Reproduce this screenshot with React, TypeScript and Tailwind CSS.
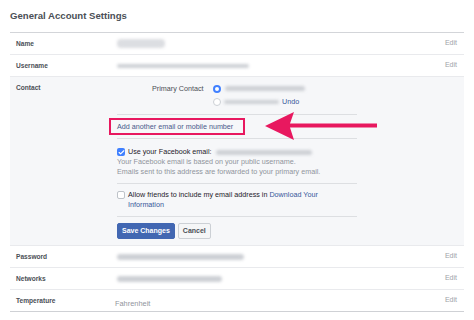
import { Check } from 'lucide-react';

const font = { fontFamily: '"Liberation Sans", Arial, sans-serif' };

function Blur({ w, h = 6, className = '' }: { w: number; h?: number; className?: string }) {
  return <div className={`bg-[#cdd0d5] rounded-sm blur-[1.5px] ${className}`} style={{ width: w, height: h }} />;
}

function Row({ label, value, last = false }: { label: string; value: React.ReactNode; last?: boolean }) {
  return (
    <div className={`flex items-center h-[22px] ${last ? 'border-b border-[#cfd1d5]' : 'border-b border-[#e9eaed]'}`}>
      <div className="w-[107px] pl-[6px] text-[6.6px] font-bold text-[#4b4f56]">{label}</div>
      <div className="flex-1">{value}</div>
      <div className="pr-[7px] text-[7px] text-[#9ea2a8]">Edit</div>
    </div>
  );
}

export default function App() {
  return (
    <div className="w-[474px] h-[320px] bg-white px-[10px] overflow-hidden" style={font}>
      <div className="h-[32px] flex items-center text-[9.6px] font-bold text-[#4b4f56]">General Account Settings</div>

      <div className="border-t border-[#d3d5d9]">
        <Row label="Name" value={<Blur w={48} h={9} className="bg-[#dcdee2]" />} />
        <Row label="Username" value={<Blur w={132} h={4} />} />

        {/* Contact section */}
        <div className="relative flex bg-[#f6f7f9] h-[169px] border-b border-[#e9eaed]">
          <div className="w-[107px] pl-[6px] pt-[6px] text-[6.6px] font-bold text-[#4b4f56] leading-[10px]">Contact</div>
          <div className="w-[240px] text-[7.2px] leading-[10px] text-[#4b4f56]">
            <div className="flex items-center h-[11px] mt-[6px] pl-[35px]">
              <span className="w-[61px]">Primary Contact</span>
              <span className="w-[8px] h-[8px] rounded-full border-[2.5px] border-[#4080ff] bg-white" />
              <Blur w={80} h={5} className="ml-[4px]" />
            </div>
            <div className="flex items-center h-[11px] mt-[2px] pl-[96px]">
              <span className="w-[8px] h-[8px] rounded-full border border-[#ccd0d5] bg-white" />
              <Blur w={55} h={4} className="ml-[3px]" />
              <span className="ml-[3px] text-[#365899]">Undo</span>
            </div>
            <div className="border-t border-[#dddfe2] mt-[7px]" />
            <div className="-ml-[8px] mt-[3px] w-[136px] h-[17px] border-[2.5px] border-[#e8185f] flex items-center pl-[6px] text-[#4a5a8a]">
              Add another email or mobile number
            </div>
            <div className="border-t border-[#dddfe2] mt-[3px]" />
            <div className="flex items-center h-[10px] mt-[8px]">
              <span className="w-[8px] h-[8px] rounded-[2px] bg-[#4080ff] flex items-center justify-center">
                <Check className="w-[7px] h-[7px] text-white" strokeWidth={4} />
              </span>
              <span className="ml-[3px] text-[#1d2129]">Use your Facebook email:</span>
              <Blur w={96} h={5} className="ml-[4px]" />
            </div>
            <div className="text-[#90949c]">Your Facebook email is based on your public username.</div>
            <div className="text-[#90949c]">Emails sent to this address are forwarded to your primary email.</div>
            <div className="border-t border-[#dddfe2] mt-[6px]" />
            <div className="flex mt-[6px]">
              <span className="w-[8px] h-[8px] mt-[1px] rounded-[2px] border border-[#bec3c9] bg-white shrink-0" />
              <p className="ml-[3px] w-[200px] text-[#1d2129]">
                Allow friends to include my email address in <span className="text-[#365899]">Download Your Information</span>
              </p>
            </div>
            <div className="border-t border-[#dddfe2] mt-[6px]" />
            <div className="flex mt-[6px] gap-[3px]">
              <button className="h-[16px] px-[4px] bg-[#4267b2] border border-[#4267b2] text-white font-bold text-[7px] rounded-[2px]">Save Changes</button>
              <button className="h-[16px] px-[4px] bg-[#f5f6f7] border border-[#ccd0d5] text-[#4b4f56] font-bold text-[7px] rounded-[2px]">Cancel</button>
            </div>
          </div>

          {/* annotation arrow */}
          <svg className="absolute left-[244px] top-[34px]" width="126" height="30" viewBox="0 0 126 30">
            <path d="M11 15 L40 1 L36 12.5 L123 12.5 L123 16.5 L36 16.5 L40 29 Z" fill="#e8185f" />
          </svg>
        </div>

        <Row label="Password" value={<Blur w={127} h={6} />} />
        <Row label="Networks" value={<Blur w={105} h={6} />} />
        <Row label="Temperature" value={<span className="text-[7.4px] text-[#90949c] -ml-[2px]">Fahrenheit</span>} last />
      </div>
    </div>
  );
}
